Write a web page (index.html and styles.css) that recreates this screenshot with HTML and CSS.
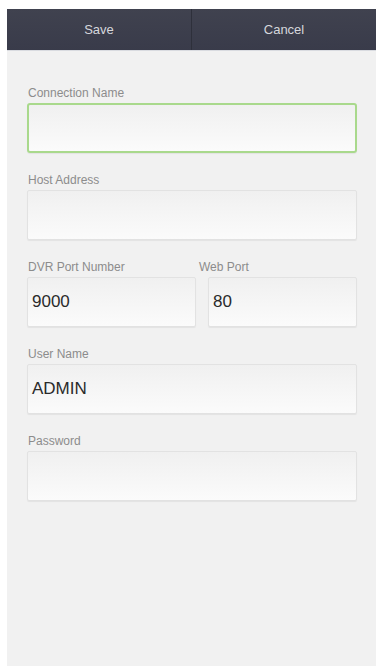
FILE: index.html
```html
<!DOCTYPE html>
<html>
<head>
<meta charset="utf-8">
<link rel="stylesheet" href="styles.css">
</head>
<body>
<div class="screen">
  <div class="toolbar">
    <div class="tb-btn">Save</div>
    <div class="tb-btn">Cancel</div>
  </div>
  <div class="form">
    <div class="field">
      <div class="label">Connection Name</div>
      <div class="box box-focus"></div>
    </div>
    <div class="field">
      <div class="label">Host Address</div>
      <div class="box"></div>
    </div>
    <div class="row">
      <div class="field grow">
        <div class="label">DVR Port Number</div>
        <div class="box">9000</div>
      </div>
      <div class="field web">
        <div class="label label-shift">Web Port</div>
        <div class="box">80</div>
      </div>
    </div>
    <div class="field">
      <div class="label">User Name</div>
      <div class="box">ADMIN</div>
    </div>
    <div class="field">
      <div class="label">Password</div>
      <div class="box"></div>
    </div>
  </div>
</div>
</body>
</html>
```
FILE: styles.css
```css
html, body {
  margin: 0;
  padding: 0;
  background: #ffffff;
}
body {
  font-family: "Liberation Sans", Arial, sans-serif;
}
.screen {
  margin: 9px 2px 0 7px;
  height: 657px;
  background: #f1f1f1;
  display: flex;
  flex-direction: column;
}
.toolbar {
  height: 41px;
  background: linear-gradient(#40424f, #393b4a);
  display: flex;
  border-bottom: 1px solid #d9dbe0;
}
.tb-btn {
  flex: 1;
  display: flex;
  align-items: center;
  justify-content: center;
  color: #d6d7dc;
  font-size: 13px;
}
.tb-btn + .tb-btn {
  border-left: 1px solid #2e303b;
}
.form {
  padding: 35px 19px 0 20px;
  display: flex;
  flex-direction: column;
}
.row {
  display: flex;
  gap: 12px;
}
.grow {
  flex: 1;
}
.web {
  width: 149px;
}
.field {
  display: flex;
  flex-direction: column;
  margin-bottom: 20px;
}
.label {
  font-size: 12px;
  line-height: 14px;
  color: #8c8c8c;
  margin-bottom: 3px;
  padding-left: 1px;
}
.label-shift {
  margin-left: -10px;
}
.box {
  box-sizing: border-box;
  height: 50px;
  background: linear-gradient(#f0f0f0, #fbfbfb);
  border: 1px solid #e2e2e2;
  border-radius: 2px;
  box-shadow: 0 1px 1px rgba(0,0,0,0.06);
  font-size: 17px;
  color: #2a2a2a;
  display: flex;
  align-items: center;
  padding-left: 4px;
}
.box-focus {
  border: 2px solid #a9d98c;
  border-radius: 3px;
}
```
